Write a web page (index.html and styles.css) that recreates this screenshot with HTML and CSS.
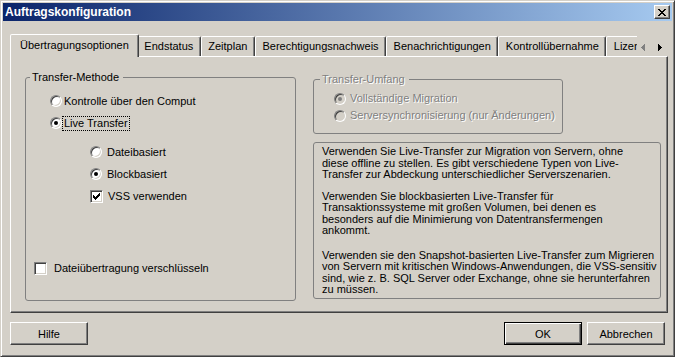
FILE: index.html
```html
<!DOCTYPE html>
<html lang="de">
<head>
    <meta charset="UTF-8">
    <title>Auftragskonfiguration</title>
    <link rel="stylesheet" href="styles.css">
</head>
<body>
    <div class="window">
        <!-- Title bar -->
        <div class="titlebar">
            <span class="titlebar__text">Auftragskonfiguration</span>
            <span class="titlebar__close">
                <svg width="8" height="7" viewBox="0 0 8 7"><path d="M0 0h2v1H0z M6 0h2v1H6z M1 1h2v1H1z M5 1h2v1H5z M2 2h4v1H2z M3 3h2v1H3z M2 4h4v1H2z M1 5h2v1H1z M5 5h2v1H5z M0 6h2v1H0z M6 6h2v1H6z" fill="#000"/></svg>
            </span>
        </div>

        <div class="dialog">
            <!-- Tab strip -->
            <div class="tabs">
                <div class="tabs__list">
                    <div class="tab tab--active">Übertragungsoptionen</div>
                    <div class="tab">Endstatus</div>
                    <div class="tab">Zeitplan</div>
                    <div class="tab">Berechtigungsnachweis</div>
                    <div class="tab">Benachrichtigungen</div>
                    <div class="tab">Kontrollübernahme</div>
                    <div class="tab">Lizenzen</div>
                </div>
                <div class="tabs__scroll">
                    <span class="arrow arrow--disabled">
                        <svg width="4" height="7" viewBox="0 0 4 7"><path d="M3 0h1v7H3z M2 1h1v5H2z M1 2h1v3H1z M0 3h1v1H0z"/></svg>
                    </span>
                    <span class="arrow">
                        <svg width="4" height="7" viewBox="0 0 4 7"><path d="M0 0h1v7H0z M1 1h1v5H1z M2 2h1v3H2z M3 3h1v1H3z"/></svg>
                    </span>
                </div>
            </div>

            <!-- Tab page -->
            <div class="panel">
                <fieldset class="group group--method">
                    <legend class="group__legend">Transfer-Methode</legend>
                    <div class="group__body group__body--method">
                        <div class="options">
                            <div class="option">
                                <span class="radio"></span>
                                <span class="label">Kontrolle über den Comput</span>
                            </div>
                            <div class="option">
                                <span class="radio radio--checked"></span>
                                <span class="label label--focus">Live Transfer</span>
                            </div>
                            <div class="options options--sub">
                                <div class="option option--sub">
                                    <span class="radio"></span>
                                    <span class="label">Dateibasiert</span>
                                </div>
                                <div class="option option--sub">
                                    <span class="radio radio--checked"></span>
                                    <span class="label">Blockbasiert</span>
                                </div>
                                <div class="option option--sub">
                                    <span class="checkbox">
                                        <svg width="7" height="7" viewBox="0 0 7 7"><path d="M6 0h1v3H6z M5 1h1v3H5z M4 2h1v3H4z M3 3h1v3H3z M2 4h1v3H2z M1 3h1v3H1z M0 2h1v3H0z"/></svg>
                                    </span>
                                    <span class="label">VSS verwenden</span>
                                </div>
                            </div>
                        </div>
                        <div class="option option--encrypt">
                            <span class="checkbox"></span>
                            <span class="label">Dateiübertragung verschlüsseln</span>
                        </div>
                    </div>
                </fieldset>

                <div class="side">
                    <fieldset class="group group--scope">
                        <legend class="group__legend is-disabled">Transfer-Umfang</legend>
                        <div class="group__body group__body--scope">
                            <div class="option option--small">
                                <span class="radio radio--checked radio--disabled"></span>
                                <span class="label is-disabled">Vollständige Migration</span>
                            </div>
                            <div class="option option--small">
                                <span class="radio radio--disabled"></span>
                                <span class="label is-disabled">Serversynchronisierung (nur Änderungen)</span>
                            </div>
                        </div>
                    </fieldset>

                    <div class="desc">
                        <p>Verwenden Sie Live-Transfer zur Migration von Servern, ohne<br>diese offline zu stellen. Es gibt verschiedene Typen von Live-<br>Transfer zur Abdeckung unterschiedlicher Serverszenarien.</p>
                        <p>Verwenden Sie blockbasierten Live-Transfer für<br>Transaktionssysteme mit großen Volumen, bei denen es<br>besonders auf die Minimierung von Datentransfermengen<br>ankommt.</p>
                        <p>Verwenden sie den Snapshot-basierten Live-Transfer zum Migrieren<br>von Servern mit kritischen Windows-Anwendungen, die VSS-sensitiv<br>sind, wie z. B. SQL Server oder Exchange, ohne sie herunterfahren<br>zu müssen.</p>
                    </div>
                </div>
            </div>

            <!-- Dialog buttons -->
            <div class="footer">
                <button class="button">Hilfe</button>
                <div class="footer__right">
                    <button class="button button--default">OK</button>
                    <button class="button">Abbrechen</button>
                </div>
            </div>
        </div>
    </div>
</body>
</html>
```

FILE: styles.css
```css
* {
    box-sizing: border-box;
}

body {
    margin: 0;
    font-family: "Liberation Sans", Arial, sans-serif;
    font-size: 11px;
    color: #000;
    background: #d4d0c8;
}

/* Window frame (classic 3D border) */
.window {
    width: 675px;
    height: 357px;
    display: flex;
    flex-direction: column;
    padding: 2px;
    background: #d4d0c8;
    border: 1px solid;
    border-color: #d4d0c8 #404040 #404040 #d4d0c8;
    box-shadow: inset 1px 1px #fff, inset -1px -1px #808080;
}

.titlebar {
    height: 18px;
    display: flex;
    align-items: center;
    justify-content: space-between;
    padding: 0 2px 0 2px;
    background: linear-gradient(to right, #0a246a, #a6caf0);
}

.titlebar__text {
    color: #fff;
    font-weight: bold;
    font-size: 12px;
}

.titlebar__close {
    width: 16px;
    height: 14px;
    display: flex;
    align-items: center;
    justify-content: center;
    background: #d4d0c8;
    border: 1px solid;
    border-color: #fff #404040 #404040 #fff;
    box-shadow: inset -1px -1px #808080;
}

.dialog {
    flex: 1;
    display: flex;
    flex-direction: column;
    padding: 13px 4px 0 7px;
}

/* Tabs */
.tabs {
    display: flex;
    height: 23px;
    margin-bottom: -1px;
    position: relative;
    z-index: 1;
}

.tabs__list {
    flex: 1;
    min-width: 0;
    display: flex;
    align-items: flex-end;
    padding-left: 2px;
    overflow: hidden;
}

.tab {
    flex: none;
    height: 20px;
    margin-bottom: 1px;
    padding: 0 6.5px;
    line-height: 19px;
    white-space: nowrap;
    background: #d4d0c8;
    border: 1px solid;
    border-bottom: 0;
    border-color: #fff #404040 transparent #fff;
    border-radius: 2px 2px 0 0;
    box-shadow: inset -1px 0 #808080;
}

.tab--active {
    height: 23px;
    margin: 0 -2px;
    padding: 0 9px 2px;
    line-height: 20px;
    position: relative;
    z-index: 1;
}

.tabs__scroll {
    width: 31px;
    display: flex;
    align-items: center;
    padding-top: 3px;
}

.arrow {
    width: 15px;
    display: flex;
    justify-content: center;
}

.arrow svg {
    fill: #000;
}

.arrow--disabled {
    justify-content: flex-start;
    padding-left: 4px;
}

.arrow--disabled svg {
    fill: #808080;
}

.panel {
    height: 257px;
    display: flex;
    gap: 17px;
    padding: 14px 0 0 14px;
    border: 1px solid;
    border-color: #fff #404040 #404040 #fff;
    box-shadow: inset -1px -1px #808080;
}

/* Group boxes */
.group {
    margin: 0;
    padding: 0;
    min-width: 0;
    border: 1px solid #808080;
    border-radius: 3px;
}

.group__legend {
    padding: 0 4px 0 2px;
    line-height: 13px;
}

.group--method {
    width: 271px;
    height: 230px;
}

.group--method .group__legend {
    margin-left: 4px;
}

.group__body--method {
    height: 216px;
    display: flex;
    flex-direction: column;
    padding: 6px 0 21px 8px;
}

.options {
    margin-left: 16px;
}

.options--sub {
    margin: 7px 0 0 40px;
}

.option {
    height: 22px;
    display: flex;
    align-items: center;
}

.option--sub {
    gap: 3px;
}

.option--encrypt {
    margin-top: auto;
    gap: 5px;
}

.side {
    width: 348px;
    display: flex;
    flex-direction: column;
    padding-top: 2px;
}

.group--scope {
    width: 250px;
    height: 61px;
}

.group--scope .group__legend {
    margin-left: 6px;
}

.group__body--scope {
    padding: 4px 0 0 20px;
}

.option--small {
    height: 17px;
    gap: 2px;
}

.label {
    line-height: 13px;
    padding: 0 1px;
    border: 1px dotted transparent;
    white-space: nowrap;
}

.label--focus {
    border-color: #000;
}

.is-disabled {
    color: #808080;
    text-shadow: 1px 1px #fff;
}

/* Radio and checkbox (sunken classic look) */
.radio {
    flex: none;
    width: 12px;
    height: 12px;
    position: relative;
    border-radius: 50%;
    background: #fff;
    border: 1px solid;
    border-color: #808080 #fff #fff #808080;
    box-shadow: inset 1px 1px #404040, inset -1px -1px #d4d0c8;
}

.radio--checked::after {
    content: "";
    position: absolute;
    left: 3px;
    top: 3px;
    width: 4px;
    height: 4px;
    border-radius: 50%;
    background: #000;
}

.radio--disabled {
    background: #d4d0c8;
}

.radio--disabled::after {
    background: #808080;
}

.checkbox {
    flex: none;
    width: 13px;
    height: 13px;
    display: flex;
    align-items: center;
    justify-content: center;
    background: #fff;
    border: 1px solid;
    border-color: #808080 #fff #fff #808080;
    box-shadow: inset 1px 1px #404040, inset -1px -1px #d4d0c8;
}

.checkbox svg {
    fill: #000;
}

/* Description text */
.desc {
    height: 157px;
    margin-top: 8px;
    padding: 3px 8px;
    line-height: 11.5px;
    white-space: nowrap;
    border: 1px solid #808080;
    border-radius: 3px;
}

.desc p {
    margin: 0 0 10px;
}

.desc p:nth-child(2) {
    margin-bottom: 13px;
}

/* Footer buttons */
.footer {
    display: flex;
    justify-content: space-between;
    margin-top: 9px;
    padding-right: 3px;
}

.footer__right {
    display: flex;
    gap: 5px;
}

.button {
    width: 78px;
    height: 23px;
    padding: 0;
    font: inherit;
    color: #000;
    background: #d4d0c8;
    border: 1px solid;
    border-color: #fff #404040 #404040 #fff;
    box-shadow: inset -1px -1px #808080;
}

.button--default {
    border-color: #000;
    box-shadow: inset 1px 1px #fff, inset -1px -1px #404040, inset -2px -2px #808080;
}
```
